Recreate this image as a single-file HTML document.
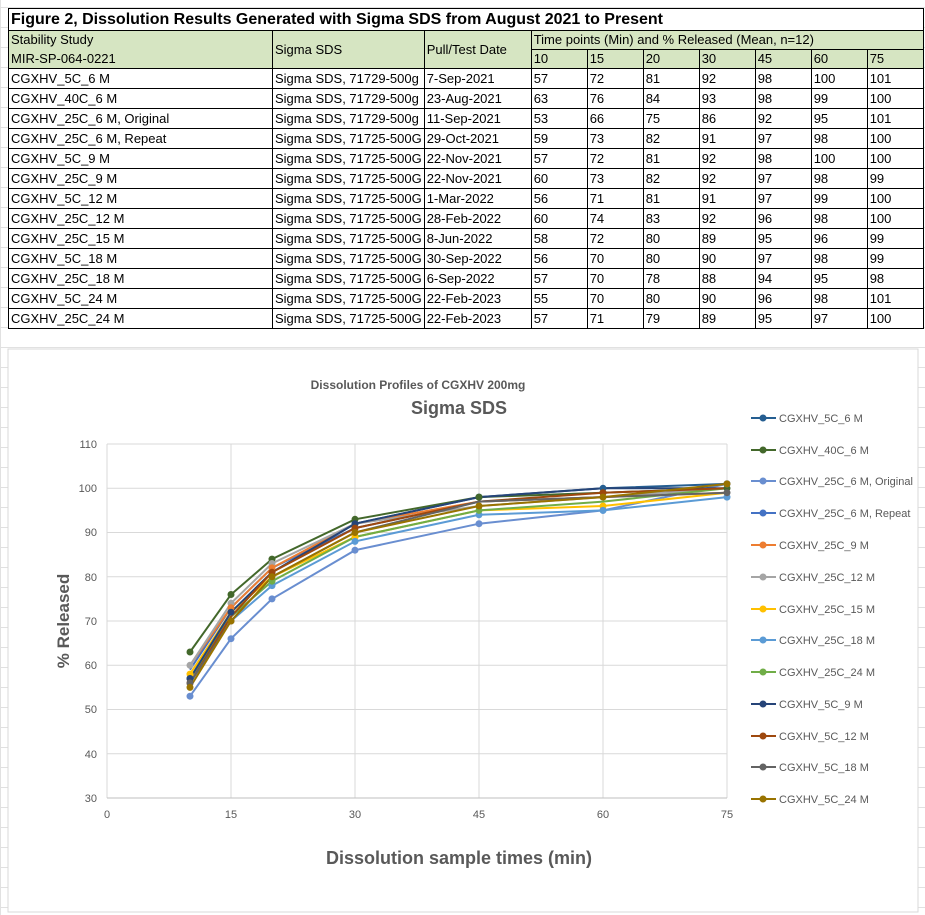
<!DOCTYPE html>
<html><head><meta charset="utf-8"><style>
*{margin:0;padding:0;box-sizing:border-box}
body{width:925px;height:915px;background:#fff;position:relative;overflow:hidden;font-family:"Liberation Sans Narrow","Liberation Sans",sans-serif;color:#000}
.grid{position:absolute;left:0;top:0;width:925px;height:915px;background-image:linear-gradient(#e1e1e1 1px,transparent 1px),linear-gradient(90deg,#e1e1e1 1px,transparent 1px);background-size:100% 20px,100% 100%;background-position:0 7px,0 0}
table{position:absolute;left:8px;top:8px;border-collapse:collapse;table-layout:fixed;font-size:13px;background:#fff}
td{border:1px solid #000;padding:0 2px;height:20px;white-space:nowrap;overflow:hidden;line-height:18px}
.t td{font-weight:bold;font-size:16px;height:22px;border-bottom:1px solid #000}
.h td{background:#d6e5c2;height:19px}
table{border:1.5px solid #000}
</style></head><body>
<div class="grid"></div>
<table>
<colgroup><col style="width:264px"><col style="width:149px"><col style="width:107px"><col style="width:56px"><col style="width:56px"><col style="width:56px"><col style="width:56px"><col style="width:56px"><col style="width:56px"><col style="width:56px"></colgroup>
<tr class="t"><td colspan="10">Figure 2, Dissolution Results Generated with Sigma SDS from August 2021 to Present</td></tr>
<tr class="h"><td style="border-bottom:none">Stability Study</td><td rowspan="2">Sigma SDS</td><td rowspan="2">Pull/Test Date</td><td colspan="7">Time points (Min) and % Released (Mean, n=12)</td></tr>
<tr class="h"><td style="border-top:none">MIR-SP-064-0221</td><td>10</td><td>15</td><td>20</td><td>30</td><td>45</td><td>60</td><td>75</td></tr>
<tr><td>CGXHV_5C_6 M</td><td>Sigma SDS, 71729-500g</td><td>7-Sep-2021</td><td>57</td><td>72</td><td>81</td><td>92</td><td>98</td><td>100</td><td>101</td></tr>
<tr><td>CGXHV_40C_6 M</td><td>Sigma SDS, 71729-500g</td><td>23-Aug-2021</td><td>63</td><td>76</td><td>84</td><td>93</td><td>98</td><td>99</td><td>100</td></tr>
<tr><td>CGXHV_25C_6 M, Original</td><td>Sigma SDS, 71729-500g</td><td>11-Sep-2021</td><td>53</td><td>66</td><td>75</td><td>86</td><td>92</td><td>95</td><td>101</td></tr>
<tr><td>CGXHV_25C_6 M, Repeat</td><td>Sigma SDS, 71725-500G</td><td>29-Oct-2021</td><td>59</td><td>73</td><td>82</td><td>91</td><td>97</td><td>98</td><td>100</td></tr>
<tr><td>CGXHV_5C_9 M</td><td>Sigma SDS, 71725-500G</td><td>22-Nov-2021</td><td>57</td><td>72</td><td>81</td><td>92</td><td>98</td><td>100</td><td>100</td></tr>
<tr><td>CGXHV_25C_9 M</td><td>Sigma SDS, 71725-500G</td><td>22-Nov-2021</td><td>60</td><td>73</td><td>82</td><td>92</td><td>97</td><td>98</td><td>99</td></tr>
<tr><td>CGXHV_5C_12 M</td><td>Sigma SDS, 71725-500G</td><td>1-Mar-2022</td><td>56</td><td>71</td><td>81</td><td>91</td><td>97</td><td>99</td><td>100</td></tr>
<tr><td>CGXHV_25C_12 M</td><td>Sigma SDS, 71725-500G</td><td>28-Feb-2022</td><td>60</td><td>74</td><td>83</td><td>92</td><td>96</td><td>98</td><td>100</td></tr>
<tr><td>CGXHV_25C_15 M</td><td>Sigma SDS, 71725-500G</td><td>8-Jun-2022</td><td>58</td><td>72</td><td>80</td><td>89</td><td>95</td><td>96</td><td>99</td></tr>
<tr><td>CGXHV_5C_18 M</td><td>Sigma SDS, 71725-500G</td><td>30-Sep-2022</td><td>56</td><td>70</td><td>80</td><td>90</td><td>97</td><td>98</td><td>99</td></tr>
<tr><td>CGXHV_25C_18 M</td><td>Sigma SDS, 71725-500G</td><td>6-Sep-2022</td><td>57</td><td>70</td><td>78</td><td>88</td><td>94</td><td>95</td><td>98</td></tr>
<tr><td>CGXHV_5C_24 M</td><td>Sigma SDS, 71725-500G</td><td>22-Feb-2023</td><td>55</td><td>70</td><td>80</td><td>90</td><td>96</td><td>98</td><td>101</td></tr>
<tr><td>CGXHV_25C_24 M</td><td>Sigma SDS, 71725-500G</td><td>22-Feb-2023</td><td>57</td><td>71</td><td>79</td><td>89</td><td>95</td><td>97</td><td>100</td></tr>
</table>
<svg style="position:absolute;left:0;top:0" width="925" height="915" font-family="Liberation Sans Narrow, Liberation Sans, sans-serif">
<rect x="8" y="349" width="910" height="563" fill="#fff" stroke="#d9d9d9"/>
<text x="418" y="389" text-anchor="middle" font-size="12" font-weight="bold" fill="#595959">Dissolution Profiles of CGXHV 200mg</text>
<text x="459" y="414" text-anchor="middle" font-size="18" font-weight="bold" fill="#595959">Sigma SDS</text>
<g stroke="#d9d9d9" stroke-width="1">
<line x1="107" y1="444" x2="727" y2="444"/><line x1="107" y1="488.3" x2="727" y2="488.3"/><line x1="107" y1="532.5" x2="727" y2="532.5"/><line x1="107" y1="576.8" x2="727" y2="576.8"/><line x1="107" y1="621" x2="727" y2="621"/><line x1="107" y1="665.3" x2="727" y2="665.3"/><line x1="107" y1="709.5" x2="727" y2="709.5"/><line x1="107" y1="753.8" x2="727" y2="753.8"/>
<line x1="107" y1="444" x2="107" y2="798"/><line x1="231" y1="444" x2="231" y2="798"/><line x1="355" y1="444" x2="355" y2="798"/><line x1="479" y1="444" x2="479" y2="798"/><line x1="603" y1="444" x2="603" y2="798"/><line x1="727" y1="444" x2="727" y2="798"/>
</g>
<line x1="107" y1="798" x2="727" y2="798" stroke="#bfbfbf"/>
<g font-size="11" fill="#595959" text-anchor="end">
<text x="97" y="448">110</text><text x="97" y="492">100</text><text x="97" y="536">90</text><text x="97" y="581">80</text><text x="97" y="625">70</text><text x="97" y="669">60</text><text x="97" y="713">50</text><text x="97" y="758">40</text><text x="97" y="802">30</text>
</g>
<g font-size="11" fill="#595959" text-anchor="middle">
<text x="107" y="818">0</text><text x="231" y="818">15</text><text x="355" y="818">30</text><text x="479" y="818">45</text><text x="603" y="818">60</text><text x="727" y="818">75</text>
</g>
<text x="459" y="864" text-anchor="middle" font-size="18" font-weight="bold" fill="#595959">Dissolution sample times (min)</text>
<text transform="translate(69,621) rotate(-90)" text-anchor="middle" font-size="17" font-weight="bold" fill="#595959">% Released</text>
<g fill="none" stroke-width="2">
<polyline stroke="#255e91" points="190,678.5 231,612.2 272,572.3 355,523.7 479,497.1 603,488.3 727,483.9"/>
<polyline stroke="#43682b" points="190,652 231,594.5 272,559.1 355,519.3 479,497.1 603,492.7 727,488.3"/>
<polyline stroke="#698ed0" points="190,696.2 231,638.7 272,598.9 355,550.2 479,523.7 603,510.4 727,483.9"/>
<polyline stroke="#4472c4" points="190,669.7 231,607.7 272,567.9 355,528.1 479,501.6 603,497.1 727,488.3"/>
<polyline stroke="#ed7d31" points="190,665.3 231,607.7 272,567.9 355,523.7 479,501.6 603,497.1 727,492.7"/>
<polyline stroke="#a5a5a5" points="190,665.3 231,603.3 272,563.5 355,523.7 479,506 603,497.1 727,488.3"/>
<polyline stroke="#ffc000" points="190,674.1 231,612.2 272,576.8 355,537 479,510.4 603,506 727,492.7"/>
<polyline stroke="#5b9bd5" points="190,678.5 231,621 272,585.6 355,541.4 479,514.8 603,510.4 727,497.1"/>
<polyline stroke="#70ad47" points="190,678.5 231,616.6 272,581.2 355,537 479,510.4 603,501.6 727,488.3"/>
<polyline stroke="#264478" points="190,678.5 231,612.2 272,572.3 355,523.7 479,497.1 603,488.3 727,488.3"/>
<polyline stroke="#9e480e" points="190,683 231,616.6 272,572.3 355,528.1 479,501.6 603,492.7 727,488.3"/>
<polyline stroke="#636363" points="190,683 231,621 272,576.8 355,532.5 479,501.6 603,497.1 727,492.7"/>
<polyline stroke="#997300" points="190,687.4 231,621 272,576.8 355,532.5 479,506 603,497.1 727,483.9"/>
</g>
<g>
<g fill="#255e91"><circle cx="190" cy="678.5" r="3.5"/><circle cx="231" cy="612.2" r="3.5"/><circle cx="272" cy="572.3" r="3.5"/><circle cx="355" cy="523.7" r="3.5"/><circle cx="479" cy="497.1" r="3.5"/><circle cx="603" cy="488.3" r="3.5"/><circle cx="727" cy="483.9" r="3.5"/></g>
<g fill="#43682b"><circle cx="190" cy="652" r="3.5"/><circle cx="231" cy="594.5" r="3.5"/><circle cx="272" cy="559.1" r="3.5"/><circle cx="355" cy="519.3" r="3.5"/><circle cx="479" cy="497.1" r="3.5"/><circle cx="603" cy="492.7" r="3.5"/><circle cx="727" cy="488.3" r="3.5"/></g>
<g fill="#698ed0"><circle cx="190" cy="696.2" r="3.5"/><circle cx="231" cy="638.7" r="3.5"/><circle cx="272" cy="598.9" r="3.5"/><circle cx="355" cy="550.2" r="3.5"/><circle cx="479" cy="523.7" r="3.5"/><circle cx="603" cy="510.4" r="3.5"/><circle cx="727" cy="483.9" r="3.5"/></g>
<g fill="#a5a5a5"><circle cx="190" cy="665.3" r="3.5"/><circle cx="231" cy="603.3" r="3.5"/><circle cx="272" cy="563.5" r="3.5"/></g>
<g fill="#ed7d31"><circle cx="272" cy="567.9" r="3.5"/><circle cx="231" cy="607.7" r="3.5"/></g>
<g fill="#ffc000"><circle cx="190" cy="674.1" r="3.5"/><circle cx="231" cy="612.2" r="3.5"/><circle cx="355" cy="537" r="3.5"/><circle cx="603" cy="506" r="3.5"/></g>
<g fill="#5b9bd5"><circle cx="272" cy="585.6" r="3.5"/><circle cx="355" cy="541.4" r="3.5"/><circle cx="479" cy="514.8" r="3.5"/><circle cx="603" cy="510.4" r="3.5"/><circle cx="727" cy="497.1" r="3.5"/></g>
<g fill="#70ad47"><circle cx="272" cy="581.2" r="3.5"/><circle cx="479" cy="510.4" r="3.5"/></g>
<g fill="#264478"><circle cx="190" cy="678.5" r="3.5"/><circle cx="231" cy="612.2" r="3.5"/><circle cx="355" cy="523.7" r="3.5"/></g>
<g fill="#9e480e"><circle cx="190" cy="683" r="3.5"/><circle cx="272" cy="572.3" r="3.5"/><circle cx="355" cy="528.1" r="3.5"/><circle cx="603" cy="492.7" r="3.5"/></g>
<g fill="#636363"><circle cx="190" cy="683" r="3.5"/><circle cx="231" cy="621" r="3.5"/><circle cx="727" cy="492.7" r="3.5"/></g>
<g fill="#997300"><circle cx="190" cy="687.4" r="3.5"/><circle cx="231" cy="621" r="3.5"/><circle cx="272" cy="576.8" r="3.5"/><circle cx="355" cy="532.5" r="3.5"/><circle cx="479" cy="506" r="3.5"/><circle cx="603" cy="497.1" r="3.5"/><circle cx="727" cy="483.9" r="3.5"/></g>
</g>
<g font-size="11" fill="#595959">
<g><line x1="751" y1="418" x2="776" y2="418" stroke="#255e91" stroke-width="2"/><circle cx="763" cy="418" r="3.5" fill="#255e91"/><text x="779" y="422">CGXHV_5C_6 M</text></g>
<g><line x1="751" y1="450" x2="776" y2="450" stroke="#43682b" stroke-width="2"/><circle cx="763" cy="450" r="3.5" fill="#43682b"/><text x="779" y="454">CGXHV_40C_6 M</text></g>
<g><line x1="751" y1="481" x2="776" y2="481" stroke="#698ed0" stroke-width="2"/><circle cx="763" cy="481" r="3.5" fill="#698ed0"/><text x="779" y="485">CGXHV_25C_6 M, Original</text></g>
<g><line x1="751" y1="513" x2="776" y2="513" stroke="#4472c4" stroke-width="2"/><circle cx="763" cy="513" r="3.5" fill="#4472c4"/><text x="779" y="517">CGXHV_25C_6 M, Repeat</text></g>
<g><line x1="751" y1="545" x2="776" y2="545" stroke="#ed7d31" stroke-width="2"/><circle cx="763" cy="545" r="3.5" fill="#ed7d31"/><text x="779" y="549">CGXHV_25C_9 M</text></g>
<g><line x1="751" y1="577" x2="776" y2="577" stroke="#a5a5a5" stroke-width="2"/><circle cx="763" cy="577" r="3.5" fill="#a5a5a5"/><text x="779" y="581">CGXHV_25C_12 M</text></g>
<g><line x1="751" y1="609" x2="776" y2="609" stroke="#ffc000" stroke-width="2"/><circle cx="763" cy="609" r="3.5" fill="#ffc000"/><text x="779" y="613">CGXHV_25C_15 M</text></g>
<g><line x1="751" y1="640" x2="776" y2="640" stroke="#5b9bd5" stroke-width="2"/><circle cx="763" cy="640" r="3.5" fill="#5b9bd5"/><text x="779" y="644">CGXHV_25C_18 M</text></g>
<g><line x1="751" y1="672" x2="776" y2="672" stroke="#70ad47" stroke-width="2"/><circle cx="763" cy="672" r="3.5" fill="#70ad47"/><text x="779" y="676">CGXHV_25C_24 M</text></g>
<g><line x1="751" y1="704" x2="776" y2="704" stroke="#264478" stroke-width="2"/><circle cx="763" cy="704" r="3.5" fill="#264478"/><text x="779" y="708">CGXHV_5C_9 M</text></g>
<g><line x1="751" y1="736" x2="776" y2="736" stroke="#9e480e" stroke-width="2"/><circle cx="763" cy="736" r="3.5" fill="#9e480e"/><text x="779" y="740">CGXHV_5C_12 M</text></g>
<g><line x1="751" y1="767" x2="776" y2="767" stroke="#636363" stroke-width="2"/><circle cx="763" cy="767" r="3.5" fill="#636363"/><text x="779" y="771">CGXHV_5C_18 M</text></g>
<g><line x1="751" y1="799" x2="776" y2="799" stroke="#997300" stroke-width="2"/><circle cx="763" cy="799" r="3.5" fill="#997300"/><text x="779" y="803">CGXHV_5C_24 M</text></g>
</g>
</svg>
</body></html>
